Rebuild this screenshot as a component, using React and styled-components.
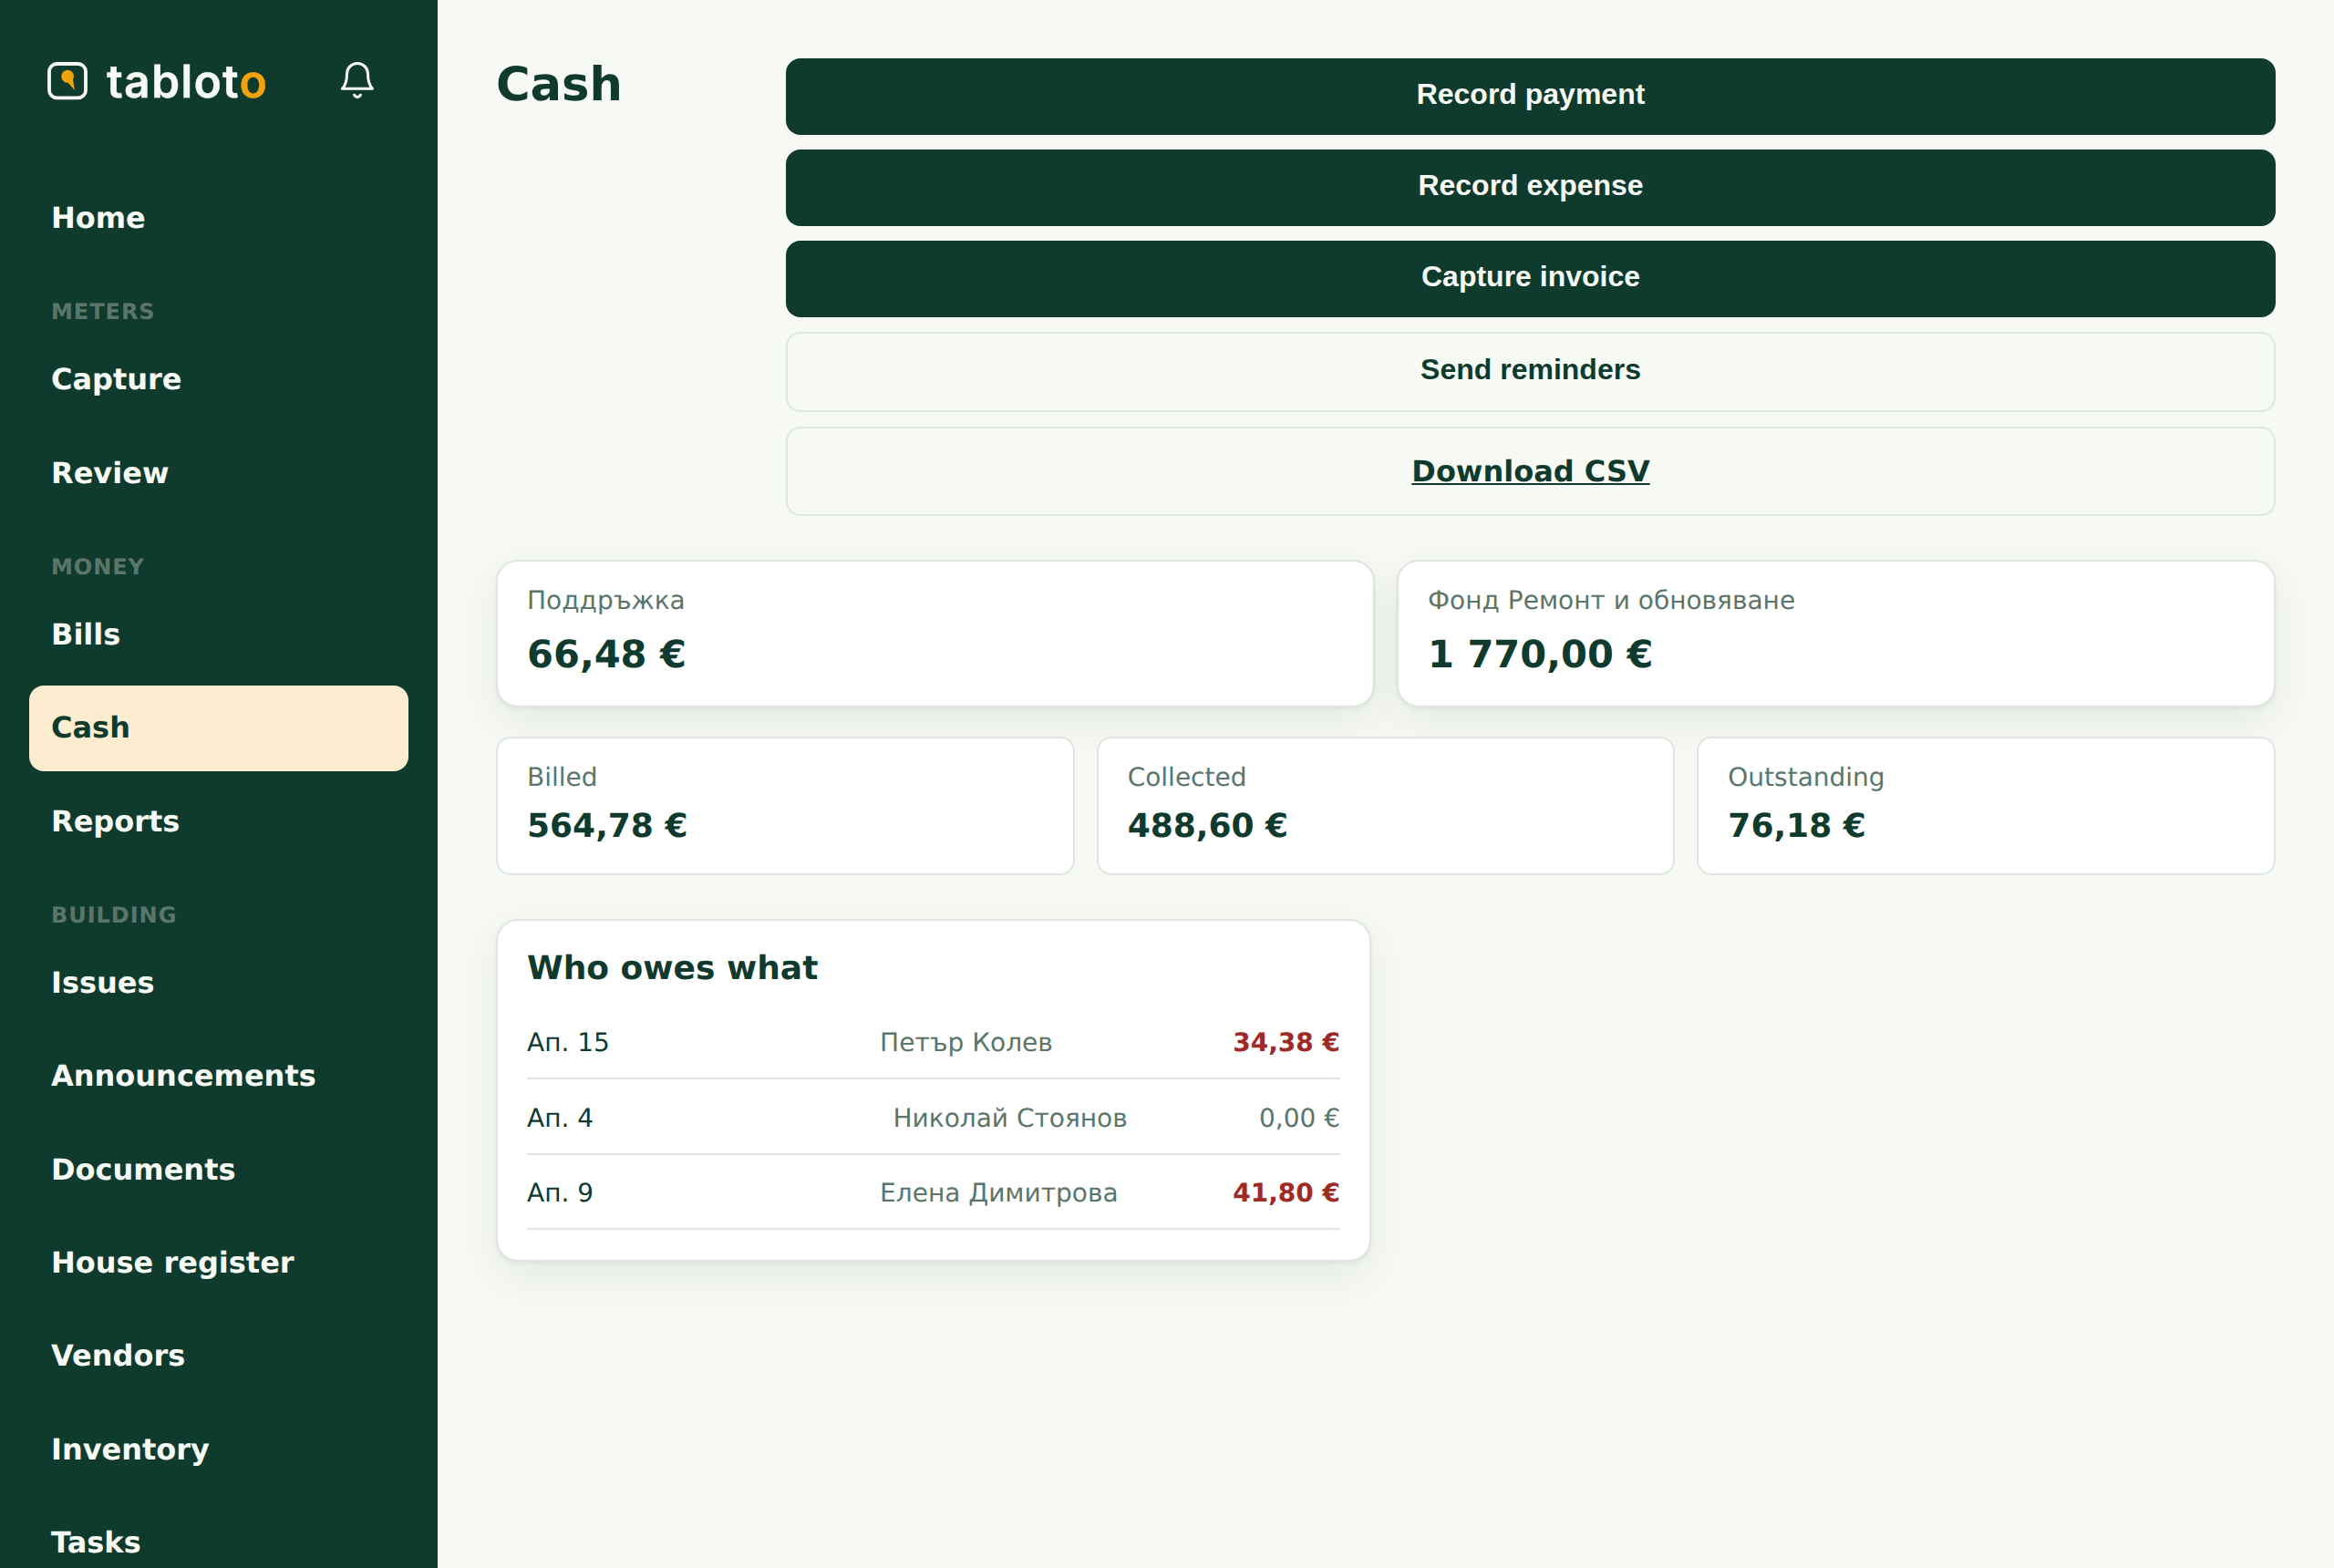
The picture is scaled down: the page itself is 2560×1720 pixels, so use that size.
import styled, { createGlobalStyle } from "styled-components";

const GlobalStyle = createGlobalStyle`
  * {
    box-sizing: border-box;
  }

  body {
    margin: 0;
    background-color: #f7f9f4;
    color: #0f3b2e;
    font-family: "DejaVu Sans", sans-serif;
    font-size: 32px;
    line-height: 1.45;
    text-rendering: geometricPrecision;
  }
`;

const Container = styled.div`
  display: flex;
  height: 1720px;
  overflow: hidden;
`;

// Sidebar
const Sidebar = styled.aside`
  width: 480px;
  flex-shrink: 0;
  padding: 0 32px;
  overflow: hidden;
  background-color: #0f3b2e;
  color: #f7f9f4;
`;

const Brand = styled.div`
  display: flex;
  align-items: center;
  justify-content: space-between;
  height: 192.7px;
  padding: 0 36px 14.7px 18px;
`;

const Logo = styled.div`
  display: flex;
  align-items: center;
`;

const Wordmark = styled.span`
  margin: 2px 0 0 19px;
  font-family: "Inter", sans-serif;
  font-size: 50px;
  font-weight: 600;
  line-height: 58px;
  letter-spacing: 1.15px;
  -webkit-text-stroke: 0.4px;
`;

const Accent = styled.span`
  color: #f2a20d;
`;

const Nav = styled.nav`
  display: flex;
  flex-direction: column;
  gap: 8px;
`;

const NavLabel = styled.span`
  padding: 30px 24px 2px;
  font-size: 24px;
  font-weight: 700;
  line-height: 34.8px;
  letter-spacing: 0.04em;
  text-transform: uppercase;
  color: #5a766b;
`;

const NavLink = styled.a`
  padding: 23.3px 24px 24.7px;
  border-radius: 16px;
  font-weight: 700;
  line-height: 46.4px;
  background-color: ${(props) => (props.$active ? "#fcecd0" : "transparent")};
  color: ${(props) => (props.$active ? "#0f3b2e" : "#f7f9f4")};
`;

// Main column
const Main = styled.main`
  flex: 1;
  padding: 64px;
`;

const Header = styled.header`
  display: flex;
  align-items: flex-start;
  justify-content: space-between;
  margin-bottom: 48px;
`;

const Title = styled.h1`
  margin: 0;
  font-size: 51.2px;
  font-weight: 700;
  line-height: 58px;
`;

const Actions = styled.div`
  display: flex;
  flex-direction: column;
  gap: 16px;
  width: 1634px;
`;

const Button = styled.button`
  display: flex;
  justify-content: center;
  align-items: flex-start;
  height: ${(props) => (props.$outline ? "88px" : "84px")};
  padding: 21px 32px;
  border: ${(props) => (props.$outline ? "2px solid #dde6df" : "none")};
  border-radius: 16px;
  font-family: "Liberation Sans", Arial, sans-serif;
  font-size: 32px;
  font-weight: 700;
  line-height: 37px;
  background-color: ${(props) => (props.$outline ? "transparent" : "#0f3b2e")};
  color: ${(props) => (props.$outline ? "#0f3b2e" : "#f7f9f4")};
`;

const DownloadLink = styled.a`
  padding: 24px 32px;
  border: 2px solid #dde6df;
  border-radius: 16px;
  font-weight: 700;
  line-height: 46px;
  text-align: center;
  text-decoration: underline;
  text-decoration-thickness: 2px;
  text-underline-offset: 2px;
`;

const Grid = styled.div`
  display: grid;
  grid-template-columns: repeat(${(props) => props.$columns}, 1fr);
  gap: 24px;
  margin-bottom: ${(props) => props.$space};
`;

const Card = styled.div`
  border: 2px solid #dde6df;
  border-radius: 24px;
  background-color: white;
  box-shadow: 0 2px 4px rgba(15, 59, 46, 0.06), 0 16px 48px rgba(15, 59, 46, 0.08);
`;

const FundCard = styled(Card)`
  height: 162px;
  padding: 26px 32px 0;
`;

const StatCard = styled(Card)`
  height: 152px;
  padding: 26px 32px 0;
  border-radius: 16px;
  box-shadow: none;
`;

const Label = styled.div`
  font-size: 28px;
  line-height: 33px;
  color: #5a766b;
`;

const FundValue = styled.div`
  margin-top: 18px;
  font-size: 41.6px;
  font-weight: 700;
  line-height: 49px;
`;

const StatValue = styled.div`
  margin-top: 17px;
  font-size: 36px;
  font-weight: 700;
  line-height: 42px;
`;

const DebtCard = styled(Card)`
  width: 960px;
  height: 376px;
  padding: 32px 32px 0;
`;

const CardTitle = styled.h2`
  margin: 0 0 17.6px;
  font-size: 36px;
  font-weight: 700;
  line-height: 42px;
`;

const Row = styled.div`
  display: flex;
  padding: 22.4px 0 17.6px;
  border-bottom: 2px solid #dde6df;
  font-size: 28px;
  line-height: 40.6px;
`;

const Cell = styled.span`
  flex: 1;
  color: ${(props) => (props.$muted ? "#5a766b" : "#0f3b2e")};
`;

const Amount = styled.span`
  font-weight: ${(props) => (props.$due ? 700 : 400)};
  color: ${(props) => (props.$due ? "#a02a26" : "#5a766b")};
`;

const sections = [
  { items: ["Home"] },
  { label: "Meters", items: ["Capture", "Review"] },
  { label: "Money", items: ["Bills", "Cash", "Reports"] },
  {
    label: "Building",
    items: [
      "Issues",
      "Announcements",
      "Documents",
      "House register",
      "Vendors",
      "Inventory",
      "Tasks",
    ],
  },
];

const funds = [
  { name: "Поддръжка", value: "66,48 €" },
  { name: "Фонд Ремонт и обновяване", value: "1 770,00 €" },
];

const stats = [
  { name: "Billed", value: "564,78 €" },
  { name: "Collected", value: "488,60 €" },
  { name: "Outstanding", value: "76,18 €" },
];

const debts = [
  { unit: "Ап. 15", owner: "Петър Колев", amount: "34,38 €", due: true },
  { unit: "Ап. 4", owner: "Николай Стоянов", amount: "0,00 €", due: false },
  { unit: "Ап. 9", owner: "Елена Димитрова", amount: "41,80 €", due: true },
];

const LogoMark = () => (
  <svg width="48" height="44" viewBox="50 67 48 44" fill="none">
    <rect x="54" y="70" width="40" height="37.4" rx="8.5" stroke="#f7f9f4" strokeWidth="3.8" />
    <path
      d="M74 76.8a7 7 0 0 1 7 7c0 1.3-.5 2.4-1 3.6L82 99l-7.4-8.2A7 7 0 1 1 74 76.8z"
      fill="#f2a20d"
    />
  </svg>
);

const BellIcon = () => (
  <svg
    width="40"
    height="44"
    viewBox="372 67 40 44"
    fill="none"
    stroke="#f7f9f4"
    strokeWidth="3"
    strokeLinecap="round"
    strokeLinejoin="round"
  >
    <path d="M375.4 97.3c3.6-3.6 5.1-8.3 5.1-16.3a11.5 11.5 0 0 1 23 0c0 8 1.5 12.7 5.1 16.3z" />
    <path d="M388.6 104.2c1.5 3 5.3 3 6.8 0" />
  </svg>
);

const SideMenu = () => {
  return (
    <Sidebar>
      <Brand>
        <Logo>
          <LogoMark />
          <Wordmark>
            tablot<Accent>o</Accent>
          </Wordmark>
        </Logo>
        <BellIcon />
      </Brand>
      <Nav>
        {sections.map((section) => [
          section.label && <NavLabel key={section.label}>{section.label}</NavLabel>,
          ...section.items.map((item) => (
            <NavLink key={item} $active={item === "Cash"}>
              {item}
            </NavLink>
          )),
        ])}
      </Nav>
    </Sidebar>
  );
};

const App = () => {
  return (
    <Container>
      <GlobalStyle />
      <SideMenu />
      <Main>
        <Header>
          <Title>Cash</Title>
          <Actions>
            <Button>Record payment</Button>
            <Button>Record expense</Button>
            <Button>Capture invoice</Button>
            <Button $outline>Send reminders</Button>
            <DownloadLink>Download CSV</DownloadLink>
          </Actions>
        </Header>
        <Grid $columns={2} $space="32px">
          {funds.map((fund) => (
            <FundCard key={fund.name}>
              <Label>{fund.name}</Label>
              <FundValue>{fund.value}</FundValue>
            </FundCard>
          ))}
        </Grid>
        <Grid $columns={3} $space="48px">
          {stats.map((stat) => (
            <StatCard key={stat.name}>
              <Label>{stat.name}</Label>
              <StatValue>{stat.value}</StatValue>
            </StatCard>
          ))}
        </Grid>
        <DebtCard>
          <CardTitle>Who owes what</CardTitle>
          {debts.map((debt) => (
            <Row key={debt.unit}>
              <Cell>{debt.unit}</Cell>
              <Cell $muted>{debt.owner}</Cell>
              <Amount $due={debt.due}>{debt.amount}</Amount>
            </Row>
          ))}
        </DebtCard>
      </Main>
    </Container>
  );
};

export default App;
